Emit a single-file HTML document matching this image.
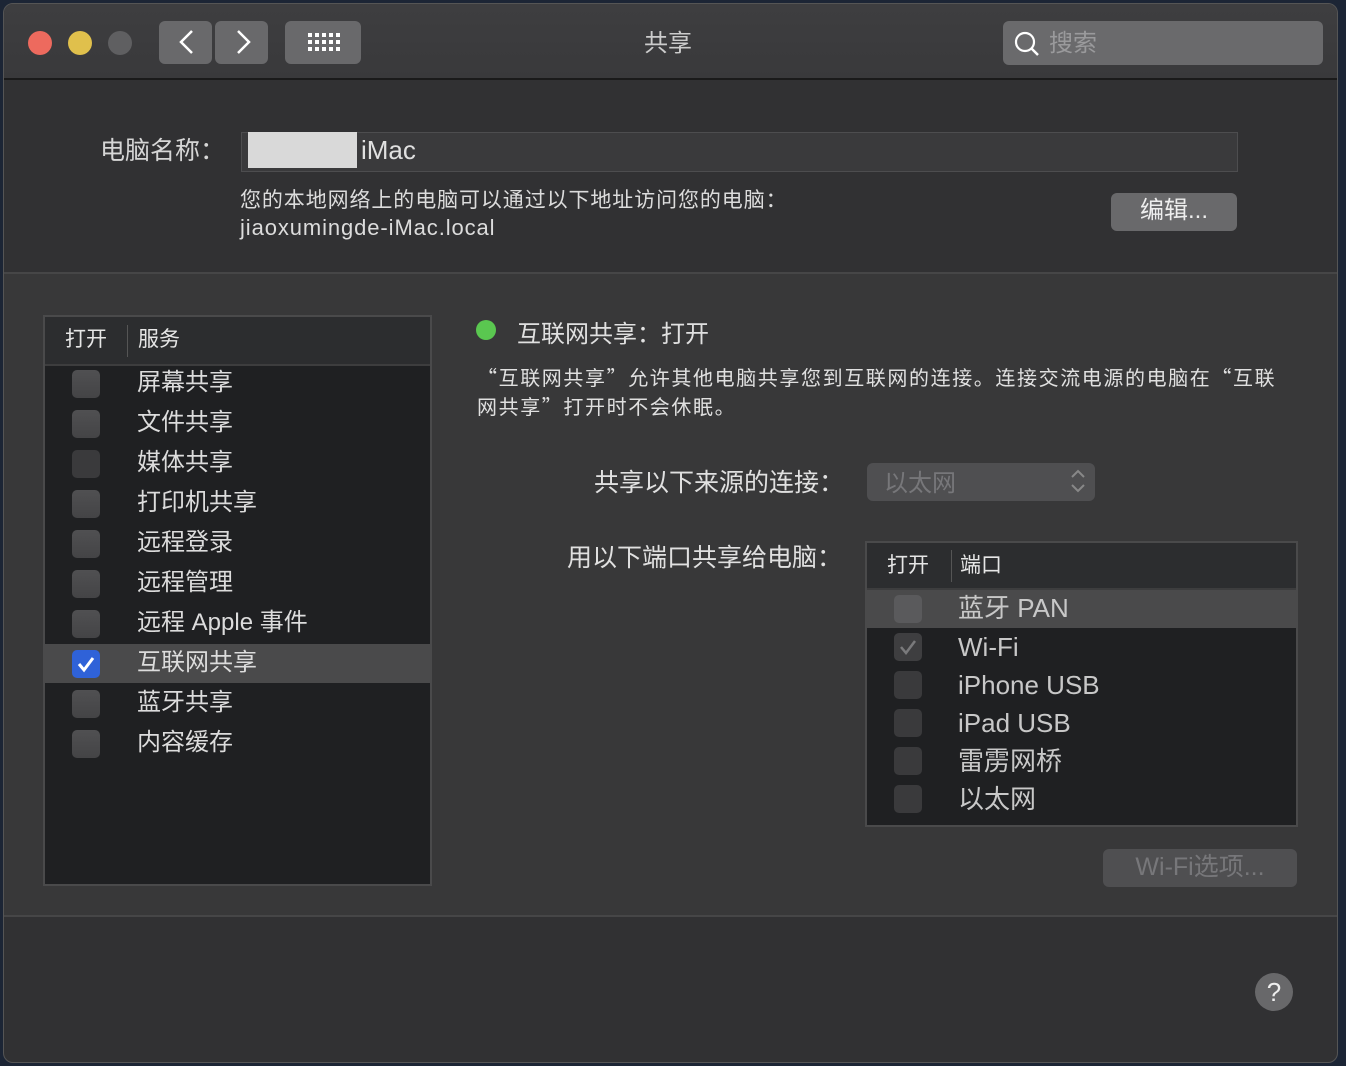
<!DOCTYPE html>
<html><head><meta charset="utf-8"><style>
*{margin:0;padding:0;box-sizing:border-box}
body{width:1346px;height:1066px;background:#1c2535;position:relative;overflow:hidden;font-family:"Liberation Sans","Noto Sans CJK SC",sans-serif;color:#dcdcdc}
.win{position:absolute;left:3px;top:3px;width:1335px;height:1060px;background:#313133;border-radius:10px;border:1px solid #555;overflow:hidden}
.tb{position:absolute;left:0;top:0;width:100%;height:76px;background:linear-gradient(#3e3e40,#39393b);border-bottom:2px solid #1a1a1a}
.dot{position:absolute;top:27px;width:24px;height:24px;border-radius:50%}
.btn{position:absolute;background:#69696b;border-radius:6px}
.abs{position:absolute;white-space:nowrap}
.cjk{font-family:"Noto Sans CJK SC",sans-serif}
.grp{position:absolute;left:-1px;top:268px;width:1337px;height:645px;background:#383839;border-top:2px solid #464647;border-bottom:2px solid #464647}
.tbl{position:absolute;background:#1f2022;border:2px solid #4a4a4b}
.hd{position:absolute;left:0;top:0;right:0;background:#2c2d2f;border-bottom:2px solid #3d3d3e}
.cb{position:absolute;width:28px;height:28px;border-radius:5px;background:linear-gradient(#505052,#444446)}
.row{position:absolute;left:0;right:0}
.s{font-size:24px;line-height:30px}
.p{font-size:26px;line-height:30px;color:#c8c8c8}
</style></head><body>
<div class="win">
 <div class="tb">
  <div class="dot" style="left:24px;background:#ed6a5e"></div>
  <div class="dot" style="left:64px;background:#e0c04c"></div>
  <div class="dot" style="left:104px;background:#5f5f61"></div>
  <div class="btn" style="left:155px;top:17px;width:53px;height:43px"></div>
  <div class="btn" style="left:211px;top:17px;width:53px;height:43px"></div>
  <svg class="abs" style="left:155px;top:17px" width="110" height="43"><path d="M33 10 L22 21 L33 32" stroke="#fff" stroke-width="2.5" fill="none"/><path d="M79 10 L90 21 L79 32" stroke="#fff" stroke-width="2.5" fill="none"/></svg>
  <div class="btn" style="left:281px;top:17px;width:76px;height:43px"></div>
  <svg class="abs" style="left:304px;top:29px" width="32" height="20" fill="#fff"><rect x="0" y="0" width="4" height="4"/><rect x="7" y="0" width="4" height="4"/><rect x="14" y="0" width="4" height="4"/><rect x="21" y="0" width="4" height="4"/><rect x="28" y="0" width="4" height="4"/><rect x="0" y="7" width="4" height="4"/><rect x="7" y="7" width="4" height="4"/><rect x="14" y="7" width="4" height="4"/><rect x="21" y="7" width="4" height="4"/><rect x="28" y="7" width="4" height="4"/><rect x="0" y="14" width="4" height="4"/><rect x="7" y="14" width="4" height="4"/><rect x="14" y="14" width="4" height="4"/><rect x="21" y="14" width="4" height="4"/><rect x="28" y="14" width="4" height="4"/></svg>
  <div class="abs cjk" style="left:640px;top:20px;font-size:24px;line-height:34px;color:#ccc">共享</div>
  <div class="btn" style="left:999px;top:17px;width:320px;height:44px;background:#6a6a6c"></div>
  <svg class="abs" style="left:1009px;top:26px" width="30" height="30"><circle cx="12" cy="12" r="9" stroke="#fff" stroke-width="2.2" fill="none"/><path d="M18.5 18.5 L25 25" stroke="#fff" stroke-width="2.5"/></svg>
  <div class="abs cjk" style="left:1045px;top:20px;font-size:24px;line-height:34px;color:#9a9a9c">搜索</div>
 </div>
 <div class="abs cjk" style="left:96px;top:128px;font-size:25px;line-height:34px;color:#d6d6d6">电脑名称：</div>
 <div class="abs" style="left:237px;top:128px;width:997px;height:40px;background:#3a3a3c;border:1px solid #4d4d4f"></div>
 <div class="abs" style="left:244px;top:128px;width:109px;height:36px;background:#d9d9d9"></div>
 <div class="abs" style="left:357px;top:131px;font-size:26px;color:#e0e0e0">iMac</div>
 <div class="abs cjk" style="left:236px;top:180px;font-size:21px;letter-spacing:0.9px;color:#dcdcdc;line-height:30px">您的本地网络上的电脑可以通过以下地址访问您的电脑：</div>
 <div class="abs" style="left:236px;top:209px;font-size:22px;letter-spacing:0.9px;color:#dcdcdc;line-height:30px">jiaoxumingde-iMac.local</div>
 <div class="btn" style="left:1107px;top:189px;width:126px;height:38px;text-align:center;font-size:24px;line-height:36px;color:#eee">编辑...</div>
 <div class="grp"></div>
 <div class="tbl" style="left:39px;top:311px;width:389px;height:571px">
  <div class="hd" style="height:49px"><span class="abs cjk" style="left:20px;top:6px;font-size:21px;line-height:30px;color:#e6e6e6">打开</span><div class="abs" style="left:82px;top:8px;width:1px;height:32px;background:#555"></div><span class="abs cjk" style="left:93px;top:6px;font-size:21px;line-height:30px;color:#e6e6e6">服务</span></div>
  <div class="row" style="top:327px;height:39px;background:#4a4a4b"></div>
 </div>
 <div class="abs" style="left:472px;top:316px;width:20px;height:20px;border-radius:50%;background:#5ac750"></div>
 <div class="abs cjk" style="left:513px;top:311px;font-size:24px;line-height:34px;color:#e0e0e0">互联网共享：打开</div>
 <div class="abs cjk" style="left:473px;top:358px;font-size:20px;letter-spacing:1.6px;line-height:29px;color:#e0e0e0">“互联网共享”允许其他电脑共享您到互联网的连接。连接交流电源的电脑在“互联<br>网共享”打开时不会休眠。</div>
 <div class="abs cjk" style="left:590px;top:460px;font-size:25px;line-height:34px;color:#e0e0e0">共享以下来源的连接：</div>
 <div class="abs" style="left:863px;top:459px;width:228px;height:38px;background:#4f4f51;border-radius:6px"></div>
 <div class="abs cjk" style="left:880px;top:460px;font-size:24px;line-height:34px;color:#77777a">以太网</div>
 <svg class="abs" style="left:1065px;top:462px" width="18" height="30"><path d="M3 11 L9 5 L15 11 M3 19 L9 25 L15 19" stroke="#888" stroke-width="2" fill="none"/></svg>
 <div class="abs cjk" style="left:563px;top:535px;font-size:25px;line-height:34px;color:#e0e0e0">用以下端口共享给电脑：</div>
 <div class="tbl" style="left:861px;top:537px;width:433px;height:286px">
  <div class="hd" style="height:47px"><span class="abs cjk" style="left:20px;top:6px;font-size:21px;line-height:30px;color:#e6e6e6">打开</span><div class="abs" style="left:84px;top:7px;width:1px;height:32px;background:#555"></div><span class="abs cjk" style="left:93px;top:6px;font-size:21px;line-height:30px;color:#e6e6e6">端口</span></div>
  <div class="row" style="top:47px;height:38px;background:#4a4a4b"></div>
 </div>
 <div class="btn" style="left:1099px;top:845px;width:194px;height:38px;background:#4f4f51;text-align:center;font-size:25px;line-height:36px;color:#77777a">Wi-Fi选项...</div>
 <div class="abs" style="left:1251px;top:969px;width:38px;height:38px;border-radius:50%;background:#68686a;text-align:center;font-size:26px;line-height:38px;color:#eee">?</div>
</div>
<div style="position:absolute;left:0;top:0">
 <div class="cb abs" style="left:72px;top:370px"></div><div class="abs s" style="left:137px;top:368px">屏幕共享</div>
 <div class="cb abs" style="left:72px;top:410px"></div><div class="abs s" style="left:137px;top:408px">文件共享</div>
 <div class="cb abs" style="left:72px;top:450px;background:#3a3a3c"></div><div class="abs s" style="left:137px;top:448px">媒体共享</div>
 <div class="cb abs" style="left:72px;top:490px"></div><div class="abs s" style="left:137px;top:488px">打印机共享</div>
 <div class="cb abs" style="left:72px;top:530px"></div><div class="abs s" style="left:137px;top:528px">远程登录</div>
 <div class="cb abs" style="left:72px;top:570px"></div><div class="abs s" style="left:137px;top:568px">远程管理</div>
 <div class="cb abs" style="left:72px;top:610px"></div><div class="abs s" style="left:137px;top:608px">远程 Apple 事件</div>
 <div class="cb abs" style="left:72px;top:650px;background:#2f62d8"></div><svg class="abs" style="left:72px;top:650px" width="28" height="28"><path d="M7 14 L12 20 L21 8" stroke="#fff" stroke-width="3" fill="none"/></svg><div class="abs s" style="left:137px;top:648px">互联网共享</div>
 <div class="cb abs" style="left:72px;top:690px"></div><div class="abs s" style="left:137px;top:688px">蓝牙共享</div>
 <div class="cb abs" style="left:72px;top:730px"></div><div class="abs s" style="left:137px;top:728px">内容缓存</div>
 <div class="cb abs" style="left:894px;top:595px;background:#5a5a5c"></div><div class="abs p" style="left:958px;top:593px">蓝牙 PAN</div>
 <div class="cb abs" style="left:894px;top:633px;background:#3e3e40"></div><svg class="abs" style="left:894px;top:633px" width="28" height="28"><path d="M7 14 L12 20 L21 8" stroke="#7a7a7c" stroke-width="2.5" fill="none"/></svg><div class="abs p" style="left:958px;top:632px">Wi-Fi</div>
 <div class="cb abs" style="left:894px;top:671px;background:#3a3a3c"></div><div class="abs p" style="left:958px;top:670px">iPhone USB</div>
 <div class="cb abs" style="left:894px;top:709px;background:#3a3a3c"></div><div class="abs p" style="left:958px;top:708px">iPad USB</div>
 <div class="cb abs" style="left:894px;top:747px;background:#3a3a3c"></div><div class="abs p" style="left:958px;top:746px">雷雳网桥</div>
 <div class="cb abs" style="left:894px;top:785px;background:#3a3a3c"></div><div class="abs p" style="left:958px;top:784px">以太网</div>
</div>
</body></html>
